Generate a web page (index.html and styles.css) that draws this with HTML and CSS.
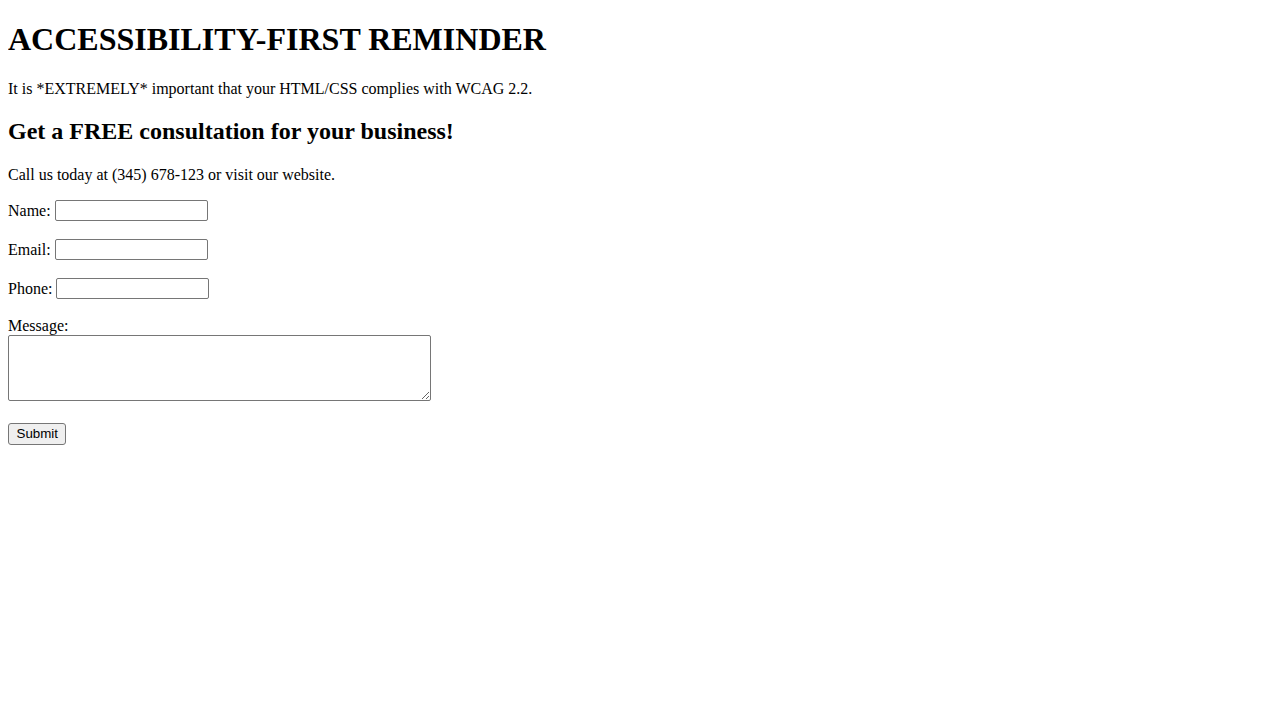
FILE: index.html
```html
<!DOCTYPE html>
<html lang="en">
<head>
<meta charset="utf-8">
<title>Free Consultation</title>
<link rel="stylesheet" href="styles.css">
</head>
<body class="page">
<h1 class="title">ACCESSIBILITY-FIRST REMINDER</h1>
<p class="text">It is *EXTREMELY* important that your HTML/CSS complies with WCAG 2.2.</p>
<h2 class="subtitle">Get a FREE consultation for your business!</h2>
<p class="text">Call us today at (345) 678-123 or visit our website.</p>
<form class="form">
  <div class="field-row"><label for="name">Name:</label><input class="input" type="text" id="name" name="name"></div>
  <div class="field-row"><label for="email">Email:</label><input class="input" type="email" id="email" name="email"></div>
  <div class="field-row"><label for="phone">Phone:</label><input class="input" type="tel" id="phone" name="phone"></div>
  <div class="field-message"><label for="message">Message:</label><textarea class="textarea" id="message" name="message" rows="4" cols="50"></textarea></div>
  <div class="field-submit"><button class="button" type="submit">Submit</button></div>
</form>
</body>
</html>
```
FILE: styles.css
```css
html {
  background: #fff;
}
.page {
  margin: 0 8px 8px;
  padding: 0;
  font-family: "Liberation Serif", "Times New Roman", serif;
  font-size: 16px;
  line-height: 18px;
  color: #000;
  background: #fff;
}
.title {
  font-size: 32px;
  line-height: 37px;
  font-weight: bold;
  margin: 21.44px 0;
}
.subtitle {
  font-size: 24px;
  line-height: 28px;
  font-weight: bold;
  margin: 19px 0 21px;
}
.text {
  margin: 16px 0;
}
.form {
  margin: 0;
}
.field-row {
  display: flex;
  align-items: center;
  gap: 4px;
  height: 22px;
  margin: 15px 0 17px;
}
.input {
  box-sizing: border-box;
  width: 153px;
  height: 21px;
  margin: 0;
  padding: 1px 2px;
  border: 1px solid #767676;
  border-radius: 2px;
  background: #fff;
  font: 13.33px "Liberation Sans", Arial, sans-serif;
  color: #000;
}
.field-message {
  display: flex;
  flex-direction: column;
  align-items: flex-start;
  margin: 15px 0 22px;
}
.textarea {
  box-sizing: border-box;
  width: 423px;
  height: 66px;
  margin: 0;
  padding: 2px;
  border: 1px solid #767676;
  border-radius: 2px;
  background: #fff;
  font: 13.33px "Liberation Mono", monospace;
}
.field-submit {
  margin: 22px 0 16px;
}
.button {
  box-sizing: border-box;
  height: 22px;
  padding: 1px 7.5px;
  margin: 0;
  border: 1px solid #767676;
  border-radius: 3px;
  background: #efefef;
  color: #000;
  font: 13.33px "Liberation Sans", Arial, sans-serif;
  line-height: 18px;
}
```
